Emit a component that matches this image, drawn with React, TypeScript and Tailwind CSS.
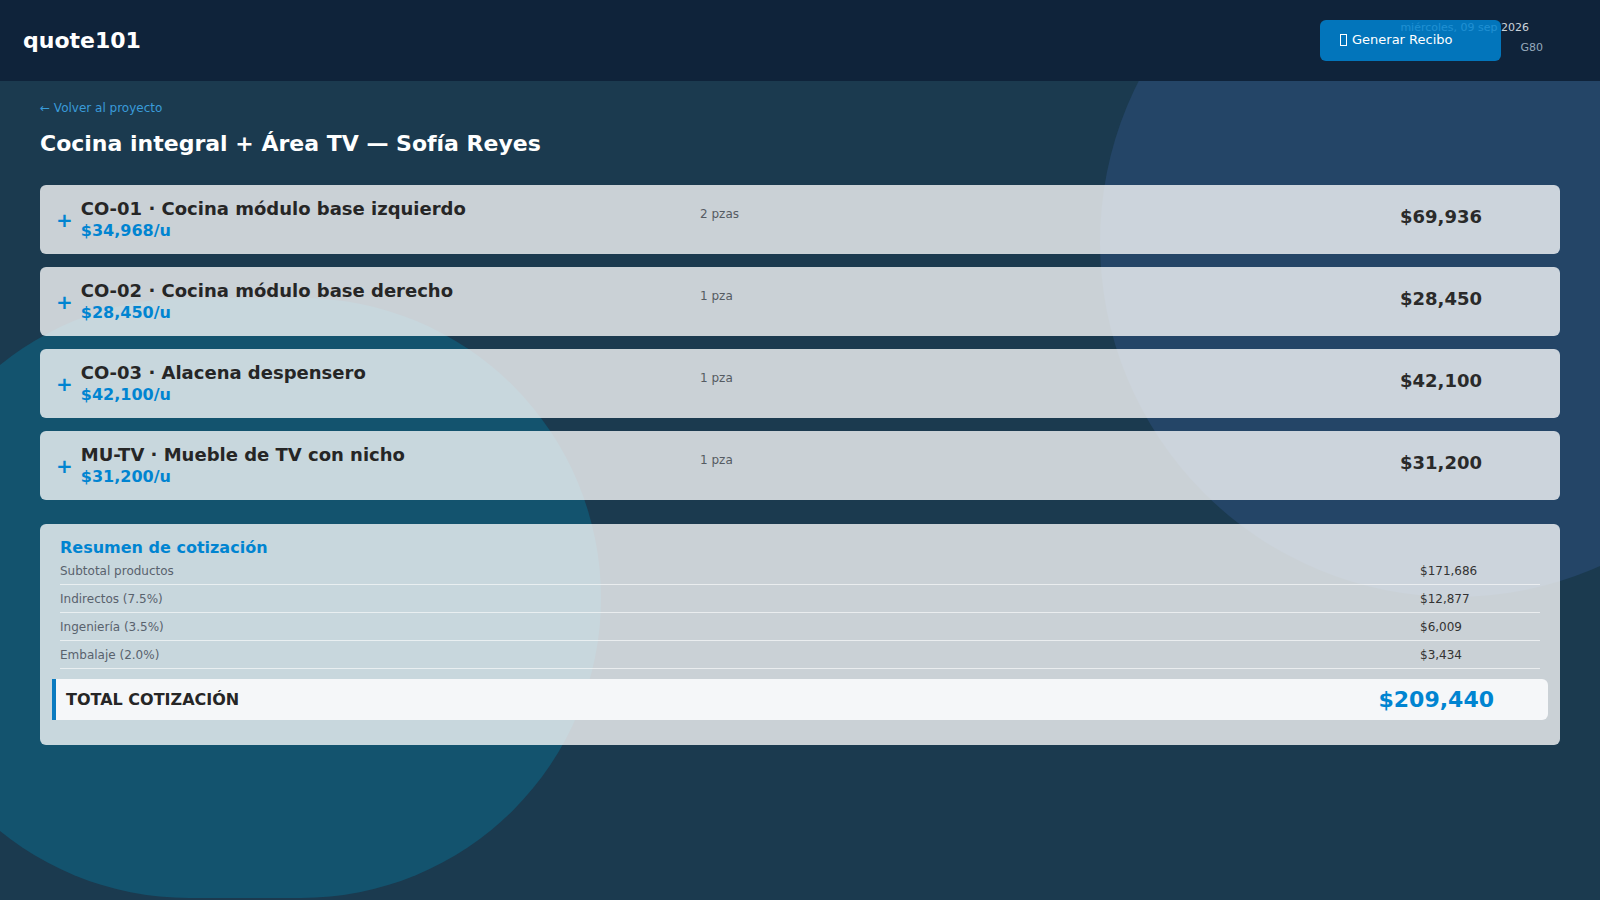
import React from 'react';

type LineItem = {
  code: string;
  name: string;
  unitPrice: number;
  qty: number;
};

const ITEMS: LineItem[] = [
  { code: 'CO-01', name: 'Cocina módulo base izquierdo', unitPrice: 34968, qty: 2 },
  { code: 'CO-02', name: 'Cocina módulo base derecho', unitPrice: 28450, qty: 1 },
  { code: 'CO-03', name: 'Alacena despensero', unitPrice: 42100, qty: 1 },
  { code: 'MU-TV', name: 'Mueble de TV con nicho', unitPrice: 31200, qty: 1 },
];

const SUMMARY_ROWS = [
  { label: 'Subtotal productos', value: 171686 },
  { label: 'Indirectos (7.5%)', value: 12877 },
  { label: 'Ingeniería (3.5%)', value: 6009 },
  { label: 'Embalaje (2.0%)', value: 3434 },
];
const QUOTE_TOTAL = 209440;

const money = (n: number) => '$' + Math.round(n).toLocaleString('en-US');

const ItemCard: React.FC<{ item: LineItem }> = ({ item }) => (
  <div className="grid h-[69px] grid-cols-[644px_1fr_144px] rounded-md bg-[rgba(255,255,255,0.77)] px-4">
    <div className="flex items-center gap-2">
      <span className="text-[20px] font-bold leading-none text-sky-600">+</span>
      <div className="flex flex-col">
        <span className="text-[18px] font-bold leading-[21px] text-[#262626]">
          {item.code} · {item.name}
        </span>
        <span className="mt-0.5 text-[16px] font-bold leading-[20px] text-sky-600">
          {money(item.unitPrice)}/u
        </span>
      </div>
    </div>
    <div className="pt-[21px] text-[12px] leading-4 text-[#555b62]">
      {item.qty} {item.qty === 1 ? 'pza' : 'pzas'}
    </div>
    <div className="pt-[21px] text-[18px] font-bold leading-[22px] text-[#2a2a2a]">
      {money(item.unitPrice * item.qty)}
    </div>
  </div>
);

export default function App() {
  return (
    <div
      className="relative min-h-screen overflow-hidden bg-[#1b3a4f]"
      style={{ fontFamily: '"DejaVu Sans", Verdana, sans-serif' }}
    >
      {/* background blobs */}
      <div className="pointer-events-none absolute left-[1100px] top-[-113px] h-[710px] w-[710px] rounded-full bg-[#244567]" />
      <div className="pointer-events-none absolute left-[-111px] top-[298px] h-[600px] w-[712px] rounded-full bg-[#13536e]" />

      <header className="relative z-10 flex h-[81px] items-center bg-[#0f233a] pl-[23px]">
        <span className="text-[22px] font-bold text-white">quote101</span>

        <div className="ml-auto flex items-center">
          <div className="relative h-[81px] w-[280px]">
            <span className="absolute right-[71px] top-[21px] text-[11px] leading-[14px] text-[#cbd3db]">
              miércoles, 09 sep 2026
            </span>
            <button className="absolute left-0 top-[20px] z-10 flex h-[41px] w-[181px] items-center gap-[5px] rounded-md bg-sky-600/85 pb-px pl-5 text-[13px] text-white">
              <span className="inline-block h-[12px] w-[7px] border border-white" />
              Generar Recibo
            </button>
            <span className="absolute right-[57px] top-[41px] text-[11px] leading-[14px] text-[#94a9bc]">
              G80
            </span>
          </div>
        </div>
      </header>

      <main className="relative z-10 px-10 pt-[19px]">
        <a className="block text-[12px] leading-4 text-[#3a9bd9]">← Volver al proyecto</a>
        <h1 className="mt-[14px] text-[22px] font-bold leading-[28px] text-white">
          Cocina integral + Área TV — Sofía Reyes
        </h1>

        <div className="mt-[27px] flex flex-col gap-[13px]">
          {ITEMS.map((item) => (
            <ItemCard key={item.code} item={item} />
          ))}
        </div>

        <section className="mt-6 rounded-md bg-[rgba(255,255,255,0.77)] px-5 pb-[25px] pt-[14px]">
          <h2 className="text-[16px] font-bold leading-[19px] text-sky-600">Resumen de cotización</h2>
          <div>
            {SUMMARY_ROWS.map((r) => (
              <div
                key={r.label}
                className="flex h-[28px] items-center border-b border-white/60 pt-px text-[12px]"
              >
                <span className="flex-1 text-[#59626d]">{r.label}</span>
                <span className="w-[120px] text-[#333]">{money(r.value)}</span>
              </div>
            ))}
          </div>
          <div className="mx-[-8px] mt-[10px] flex h-[41px] items-center rounded-r-md border-l-4 border-[#0a7bc0] bg-[#f5f7f9] pl-2.5">
            <span className="flex-1 text-[16px] font-bold text-[#262626]">TOTAL COTIZACIÓN</span>
            <span className="mr-[54px] text-[22px] font-bold text-sky-600">{money(QUOTE_TOTAL)}</span>
          </div>
        </section>
      </main>
    </div>
  );
}
